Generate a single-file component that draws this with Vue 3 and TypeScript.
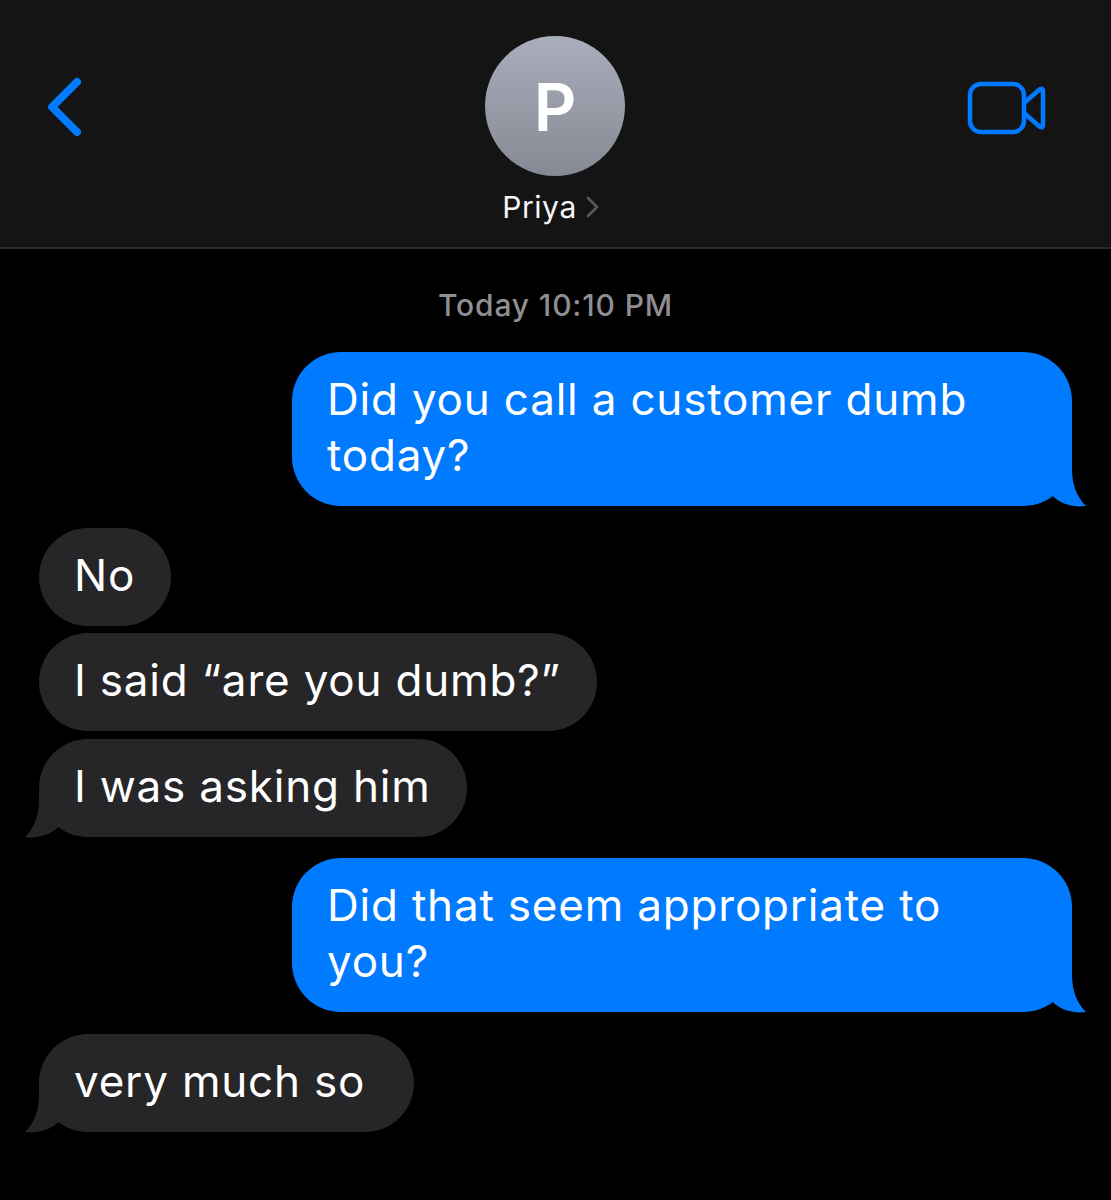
<script setup lang="ts">
interface Message {
  id: number
  text: string
  mine: boolean
  tail: boolean
  gap: number
}

const messages: Message[] = [
  { id: 1, text: 'Did you call a customer dumb today?', mine: true, tail: true, gap: 0 },
  { id: 2, text: 'No', mine: false, tail: false, gap: 22 },
  { id: 3, text: 'I said “are you dumb?”', mine: false, tail: false, gap: 7 },
  { id: 4, text: 'I was asking him', mine: false, tail: true, gap: 8 },
  { id: 5, text: 'Did that seem appropriate to you?', mine: true, tail: true, gap: 21 },
  { id: 6, text: 'very much so\u00a0', mine: false, tail: true, gap: 22 },
]
</script>

<template>
  <div class="screen">
    <header class="nav">
      <svg class="back" width="36" height="60" viewBox="0 0 36 60" fill="none">
        <path d="M30 5 L5 30 L30 55" stroke="#007aff" stroke-width="8" stroke-linecap="round" stroke-linejoin="round" />
      </svg>
      <div class="contact">
        <div class="avatar">P</div>
        <div class="name">
          Priya
          <svg width="13" height="22" viewBox="0 0 13 22" fill="none">
            <path d="M2 2 L11 11 L2 20" stroke="#5a5a5c" stroke-width="2.6" stroke-linecap="round" stroke-linejoin="round" />
          </svg>
        </div>
      </div>
      <svg class="video" width="80" height="54" viewBox="0 0 80 54" fill="none">
        <rect x="3" y="3" width="54" height="48" rx="11" stroke="#007aff" stroke-width="4.5" />
        <path d="M57 22 L72.5 8.5 Q76 6.5 76 10 L76 44 Q76 47.5 72.5 45.5 L57 32" stroke="#007aff" stroke-width="4.5" stroke-linejoin="round" />
      </svg>
    </header>

    <main class="thread">
      <div class="stamp">Today 10:10 PM</div>
      <div
        v-for="m in messages"
        :key="m.id"
        class="bubble"
        :class="m.mine ? 'mine' : 'theirs'"
        :style="{ marginTop: m.gap + 'px' }"
      >
        <span class="text">{{ m.text }}</span>
        <svg v-if="m.tail" class="tail" width="66" height="47" viewBox="0 0 66 47">
          <path d="M52 0 L52 8 C52 24 56 36 66 46 C55 47.5 42 45 32 35.5 C25 42 15 46 0 45 L0 0 Z" />
        </svg>
      </div>
    </main>
  </div>
</template>

<style>
html,
body {
  margin: 0;
  background: #000;
}
</style>

<style scoped>
.screen {
  width: 1111px;
  height: 1200px;
  background: #000;
  overflow: hidden;
  font-family: Inter, "Liberation Sans", sans-serif;
  color: #fff;
}

.nav {
  height: 247px;
  display: grid;
  grid-template-columns: 1fr auto 1fr;
  align-items: start;
  padding: 0 48px 0 47px;
  background: #141415;
  border-bottom: 2px solid #2b2b2d;
}

.back {
  margin-top: 77px;
}

.video {
  justify-self: end;
  margin-top: 81px;
  margin-right: 16px;
}

.contact {
  display: flex;
  flex-direction: column;
  align-items: center;
  padding-top: 36px;
}

.avatar {
  width: 140px;
  height: 140px;
  border-radius: 50%;
  background: linear-gradient(180deg, #a9aebb, #858993);
  display: flex;
  align-items: center;
  justify-content: center;
  font-size: 66px;
  font-weight: 600;
  line-height: 1;
  padding-top: 1px;
  box-sizing: border-box;
}

.name {
  display: flex;
  align-items: center;
  gap: 9px;
  margin-top: 12px;
  margin-right: 9px;
  font-size: 30px;
  line-height: 38px;
  letter-spacing: 0.6px;
  color: #f5f5f7;
}

.thread {
  display: flex;
  flex-direction: column;
  padding: 0 39px;
}

.stamp {
  align-self: center;
  margin-top: 38px;
  margin-bottom: 29px;
  font-size: 30px;
  line-height: 36px;
  font-weight: 500;
  letter-spacing: 0.85px;
  color: #8e8e93;
}

.bubble {
  position: relative;
  box-sizing: border-box;
  width: fit-content;
  max-width: 780px;
  padding: 19px 36px 23px 35px;
  border-radius: 49px;
  font-size: 44px;
  line-height: 56px;
  letter-spacing: 0.8px;
}

.text {
  position: relative;
  z-index: 1;
}

.mine {
  align-self: flex-end;
  width: 780px;
  background: #007aff;
}

.theirs {
  align-self: flex-start;
  background: #262628;
}

.tail {
  position: absolute;
  bottom: -1px;
  right: -14px;
  fill: #007aff;
}

.theirs .tail {
  right: auto;
  left: -14px;
  transform: scaleX(-1);
  fill: #262628;
}
</style>
